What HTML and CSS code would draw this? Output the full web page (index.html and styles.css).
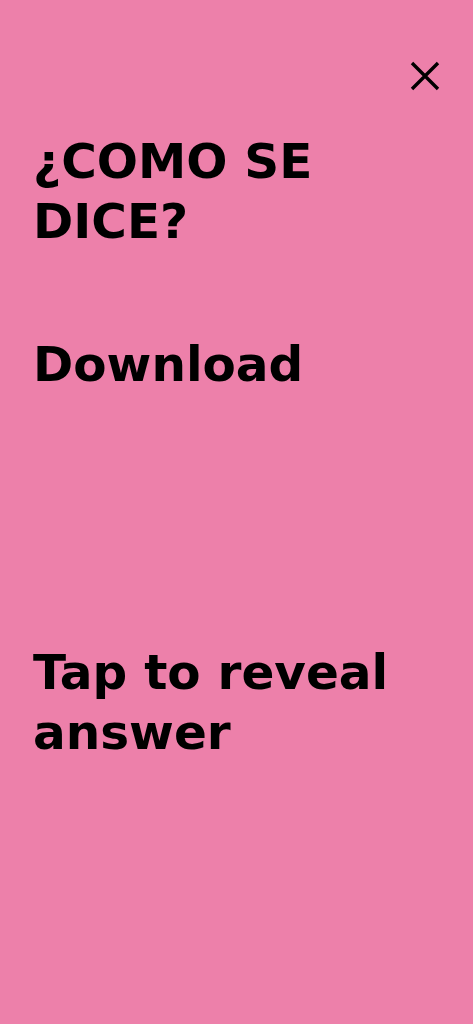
FILE: index.html
```html
<!DOCTYPE html>
<html lang="es">
<head>
<meta charset="utf-8">
<link rel="stylesheet" href="styles.css">
</head>
<body>
<div class="screen">
  <div class="topbar">
    <button class="close" aria-label="Close">
      <svg width="30" height="30" viewBox="0 0 30 30"><path d="M2 2 L28 28 M28 2 L2 28" stroke="#000" stroke-width="3.4" fill="none"/></svg>
    </button>
  </div>
  <div class="content">
    <h1 class="title">¿COMO SE DICE?</h1>
    <p class="word">Download</p>
    <p class="hint">Tap to reveal answer</p>
  </div>
</div>
</body>
</html>
```
FILE: styles.css
```css
html, body {
  margin: 0;
  padding: 0;
}
body {
  background: #ed80aa;
  font-family: "DejaVu Sans", sans-serif;
  color: #000;
}
.screen {
  height: 1024px;
  display: flex;
  flex-direction: column;
}
.topbar {
  display: flex;
  justify-content: flex-end;
  padding: 61px 33px 0 0;
}
.close {
  background: none;
  border: 0;
  padding: 0;
  width: 30px;
  height: 30px;
  display: block;
}
.close svg { display: block; }
.content {
  padding: 40px 40px 0 33px;
  display: flex;
  flex-direction: column;
}
.title, .word, .hint {
  margin: 0;
  font-size: 48.5px;
  line-height: 60px;
  font-weight: 700;
}
.title { width: 320px; }
.word { margin-top: 83px; }
.hint { margin-top: 248px; }
```
